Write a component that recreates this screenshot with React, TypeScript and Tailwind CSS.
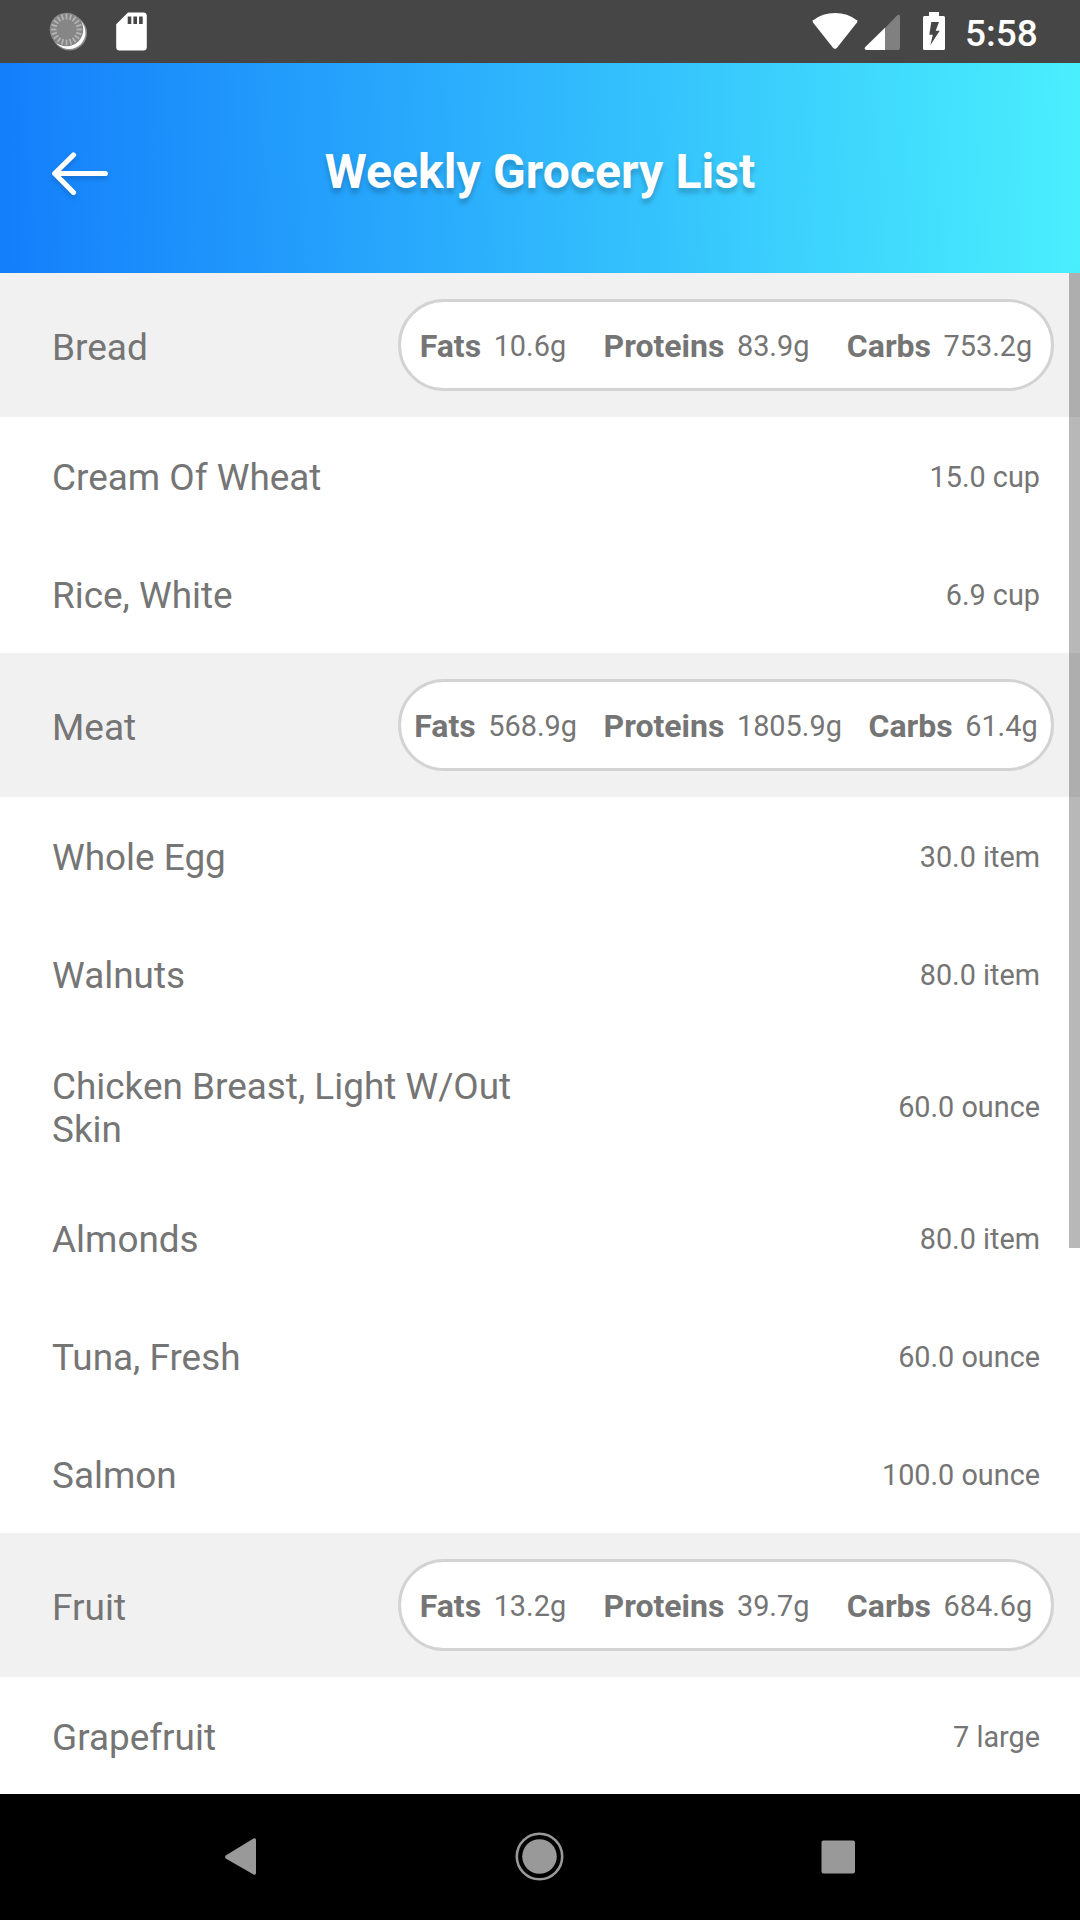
import React from "react";

type Item = { name: string; amount: string };
type Section = {
  title: string;
  fats: string;
  proteins: string;
  carbs: string;
  items: Item[];
};

const sections: Section[] = [
  {
    title: "Bread",
    fats: "10.6g",
    proteins: "83.9g",
    carbs: "753.2g",
    items: [
      { name: "Cream Of Wheat", amount: "15.0 cup" },
      { name: "Rice, White", amount: "6.9 cup" },
    ],
  },
  {
    title: "Meat",
    fats: "568.9g",
    proteins: "1805.9g",
    carbs: "61.4g",
    items: [
      { name: "Whole Egg", amount: "30.0 item" },
      { name: "Walnuts", amount: "80.0 item" },
      { name: "Chicken Breast, Light W/Out Skin", amount: "60.0 ounce" },
      { name: "Almonds", amount: "80.0 item" },
      { name: "Tuna, Fresh", amount: "60.0 ounce" },
      { name: "Salmon", amount: "100.0 ounce" },
    ],
  },
  {
    title: "Fruit",
    fats: "13.2g",
    proteins: "39.7g",
    carbs: "684.6g",
    items: [{ name: "Grapefruit", amount: "7 large" }],
  },
];

const ticks = Array.from({ length: 20 }, (_, i) => i * 18);

function SyncIcon() {
  return (
    <svg className="ml-[49px] h-[40px] w-[40px]" viewBox="0 0 40 40">
      <circle cx="20.5" cy="21" r="17.5" fill="#8a8a8a" />
      <circle cx="20" cy="20.5" r="16.5" fill="#fff" />
      <circle cx="17.5" cy="17.5" r="16.8" fill="#868686" />
      {ticks.map((a) => (
        <line
          key={a}
          x1="17.5"
          y1="1.8"
          x2="17.5"
          y2="7.4"
          stroke="#b4b4b4"
          strokeWidth="1.7"
          transform={`rotate(${a} 17.5 17.5)`}
        />
      ))}
    </svg>
  );
}

function StatusBar() {
  return (
    <div className="flex h-[63px] shrink-0 items-start bg-[#464646] pt-[12px] text-white">
      <SyncIcon />
      <svg className="ml-[27px] h-[39px] w-[31px]" viewBox="0 0 31 39">
        <path
          fill="#fff"
          fillRule="evenodd"
          d="M12 0.5H27.5Q30.8 0.5 30.8 4V35Q30.8 38.5 27.5 38.5H3.5Q0.2 38.5 0.2 35V12.3ZM11.7 4.5V12H15.3V4.5ZM17.4 4.5V12H21V4.5ZM23.1 4.5V12H26.7V4.5Z"
        />
      </svg>
      <svg className="ml-auto h-[38px] w-[46px]" viewBox="0 0 46 38">
        <path
          fill="#fff"
          d="M1.2 8.2Q10.5 1 23 1T44.8 8.2Q46 9.2 45 10.5L25 35.8Q23 38 21 35.8L1 10.5Q0 9.2 1.2 8.2Z"
        />
      </svg>
      <svg className="ml-[6px] h-[39px] w-[36px]" viewBox="0 0 36 39">
        <path fill="#808080" d="M20.5 16.5L33 3.6Q36 1.5 36 4.5V36Q36 38 34 38H20.5Z" />
        <path fill="#fff" d="M21 15.7V38H2Q-0.3 37 1.3 35Z" />
      </svg>
      <svg className="ml-[22px] h-[38px] w-[24px]" viewBox="0 0 24 38">
        <path
          fill="#fff"
          fillRule="evenodd"
          d="M7 0H17V4H21.5Q23 4 23 5.5V36.5Q23 38 21.5 38H2.5Q1 38 1 36.5V5.5Q1 4 2.5 4H7ZM9.3 10L7.3 22.7H10.8L8.3 33.3L17.7 18.8H13.7L17 10Z"
        />
      </svg>
      <span className="mr-[43px] ml-[19px] w-[72px] text-[37px] leading-[44px] font-medium whitespace-nowrap">
        5:58
      </span>
    </div>
  );
}

function Header() {
  return (
    <header className="flex h-[210px] shrink-0 items-center bg-[linear-gradient(89deg,#147efb_0%,#4aeffd_100%)] text-white">
      <svg
        className="ml-[48px] h-[60px] w-[64px] drop-shadow-[0_3px_2px_rgba(0,0,0,0.15)]"
        viewBox="0 0 64 60"
        fill="none"
        stroke="#fff"
        strokeWidth="5.2"
        strokeLinecap="round"
        strokeLinejoin="round"
      >
        <path d="M57.3 35.5H7M25.5 17L6.7 35.5L25.5 54.5" />
      </svg>
      <h1 className="mr-[112px] flex-1 pt-[7px] text-center text-[48px] leading-[56px] font-bold tracking-[0.1px] [text-shadow:0_5px_5px_rgba(0,0,0,0.2)]">
        Weekly Grocery List
      </h1>
    </header>
  );
}

function Macro({ label, value }: { label: string; value: string }) {
  return (
    <div className="flex items-center whitespace-nowrap">
      <span className="text-[32px] leading-[38px] font-bold">{label}</span>
      <span className="ml-[12.5px] text-[28.875px] leading-[38px]">{value}</span>
    </div>
  );
}

function SectionView({ section }: { section: Section }) {
  return (
    <section className="shrink-0">
      <div className="flex h-[144px] items-center bg-[#f1f1f1] pr-[26px] pl-[52px]">
        <h2 className="flex-1 pt-[5px] text-[37px] leading-[43px]">{section.title}</h2>
        <div className="flex h-[92px] w-[656px] items-center justify-around rounded-full border-[3px] border-[#d3d3d3] bg-white pt-[2px]">
          <Macro label="Fats" value={section.fats} />
          <Macro label="Proteins" value={section.proteins} />
          <Macro label="Carbs" value={section.carbs} />
        </div>
      </div>
      {section.items.map((item) => (
        <div
          key={item.name}
          className="flex min-h-[118px] items-center justify-between pt-[31.5px] pr-[40px] pb-[28.5px] pl-[52px]"
        >
          <span className="w-[486px] text-[36.9px] leading-[43px]">{item.name}</span>
          <span className="mb-px text-[28.8px] leading-[34px]">{item.amount}</span>
        </div>
      ))}
    </section>
  );
}

function NavBar() {
  return (
    <nav className="flex h-[126px] shrink-0 items-center justify-between bg-black px-[210px]">
      <svg className="h-[60px] w-[60px]" viewBox="0 0 60 60" fill="#999">
        <path d="M15.7 28.5L43.5 11.5Q46 10.5 46 13V46Q46 48.5 43.5 47.5L15.7 31.5Q14.3 30 15.7 28.5Z" />
      </svg>
      <svg className="h-[60px] w-[60px]" viewBox="0 0 60 60">
        <circle cx="29.5" cy="29.5" r="22.7" fill="none" stroke="#999" strokeWidth="2.6" />
        <circle cx="29.5" cy="29.5" r="17.3" fill="#999" />
      </svg>
      <svg className="h-[60px] w-[60px]" viewBox="0 0 60 60" fill="#999">
        <rect x="11.5" y="13.5" width="33.5" height="33" rx="2" />
      </svg>
    </nav>
  );
}

export default function App() {
  return (
    <div className="flex h-[1920px] w-[1080px] flex-col overflow-hidden bg-white font-['Roboto',sans-serif] text-[#757575]">
      <StatusBar />
      <Header />
      <main className="relative flex h-[1521px] shrink-0 flex-col overflow-hidden">
        {sections.map((s) => (
          <SectionView key={s.title} section={s} />
        ))}
        <div className="absolute top-0 right-0 h-[975px] w-[11px] bg-black/28" />
      </main>
      <NavBar />
    </div>
  );
}
